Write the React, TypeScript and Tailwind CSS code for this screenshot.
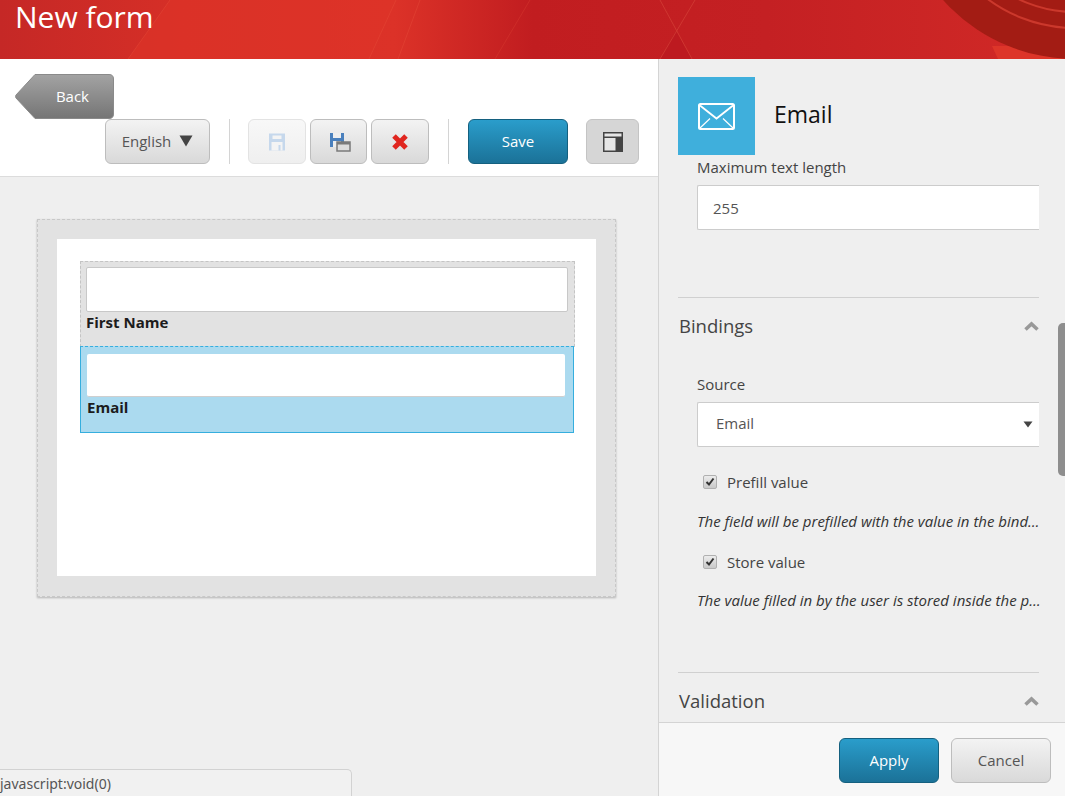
import React, { FC } from "react";

const grayBtn =
  "flex items-center justify-center rounded-[6px] border border-[#bdbdbd] bg-gradient-to-b from-[#f3f3f3] to-[#d9d9d9]";
const blueBtn =
  "flex items-center justify-center rounded-[6px] border border-[#14607f] bg-gradient-to-b from-[#2a9dcb] to-[#1b7298] text-white text-[15px]";

const HeaderArt: FC = () => (
  <svg className="absolute inset-0" width="1065" height="59" viewBox="0 0 1065 59">
    <defs>
      <linearGradient id="hdr" x1="0" x2="1" y1="0" y2="0">
        <stop offset="0" stopColor="#c52826" />
        <stop offset="0.17" stopColor="#d62f27" />
        <stop offset="0.37" stopColor="#dc3228" />
        <stop offset="0.5" stopColor="#c11d20" />
        <stop offset="0.72" stopColor="#c42023" />
        <stop offset="0.95" stopColor="#cf2826" />
        <stop offset="1" stopColor="#cf2826" />
      </linearGradient>
    </defs>
    <rect width="1065" height="59" fill="url(#hdr)" />
    <path d="M128 59 L170 0 H396 L369 59 Z" fill="#de3428" opacity="0.6" />
    <path d="M369 59 L396 0 M128 59 L170 0 M420 0 L398 59" stroke="#e8503c" strokeWidth="1" opacity="0.4" />
    <path d="M495 59 L530 0" stroke="#d6392f" strokeWidth="1" opacity="0.5" />
    <path d="M660 59 L676 31 L692 59 Z" fill="#bd1a20" />
    <path d="M660 0 L692 59 M695 0 L660 59" stroke="#d8483c" strokeWidth="1" opacity="0.6" />
    <path d="M992 46 L1065 46 V59 H998 Z" fill="#dd3529" />
    <circle cx="1075" cy="-118" r="177" fill="#a31c14" />
    <circle cx="1075" cy="-118" r="146" fill="none" stroke="#cb382c" strokeWidth="2" />
    <circle cx="1075" cy="-118" r="130" fill="none" stroke="#cb382c" strokeWidth="2" />
  </svg>
);

const BackButton: FC = () => (
  <div className="relative flex h-[45px] w-[99px] items-center justify-end pr-[25px] text-[15px] text-white">
    <svg className="absolute inset-0" width="99" height="45" viewBox="0 0 99 45">
      <defs>
        <linearGradient id="back" x1="0" x2="0" y1="0" y2="1">
          <stop offset="0" stopColor="#a3a3a3" />
          <stop offset="1" stopColor="#757575" />
        </linearGradient>
      </defs>
      <path
        d="M20 0.5 H94 Q98.5 0.5 98.5 5 V40 Q98.5 44.5 94 44.5 H20 L1 24 Q0 22.5 1 21 Z"
        fill="url(#back)"
        stroke="#8a8a8a"
      />
    </svg>
    <span className="relative">Back</span>
  </div>
);

const FloppyIcon: FC<{ color: string }> = ({ color }) => (
  <svg width="20" height="20" viewBox="0 0 20 20">
    <path d="M2 1.5 H18 V18.5 H2 Z" fill={color} />
    <rect x="5.5" y="3.5" width="9" height="3.5" fill="#f4f4f4" />
    <rect x="4.5" y="10" width="11" height="8.5" fill="#f4f4f4" />
    <rect x="11.5" y="13" width="2" height="5.5" fill={color} />
  </svg>
);

const FloppyCopyIcon: FC = () => (
  <svg width="22" height="20" viewBox="0 0 22 20">
    <path d="M1 1 H15 V15 H1 Z" fill="#4a80bd" />
    <rect x="4" y="1" width="8" height="5" fill="#eeeeee" />
    <rect x="4" y="9" width="8" height="6" fill="#eeeeee" />
    <rect x="8" y="10" width="13" height="9" fill="#dddddd" stroke="#7a7a7a" strokeWidth="1.5" />
    <rect x="8" y="10" width="13" height="2.5" fill="#7a7a7a" />
  </svg>
);

const Chevron: FC = () => (
  <svg width="15" height="10" viewBox="0 0 15 10">
    <path d="M1.5 8.5 L7.5 3 L13.5 8.5" fill="none" stroke="#999" strokeWidth="3.6" />
  </svg>
);

const Checkbox: FC = () => (
  <span className="flex h-[14px] w-[14px] items-center justify-center rounded-[2px] border border-[#b0b0b0] bg-gradient-to-b from-[#ececec] to-[#c9c9c9]">
    <svg width="10" height="10" viewBox="0 0 10 10">
      <path d="M1.5 5 L4 7.5 L8.5 1.5" fill="none" stroke="#333" strokeWidth="2" />
    </svg>
  </span>
);

const FormRow: FC<{ label: string; selected?: boolean }> = ({ label, selected }) =>
  selected ? (
    <div className="relative -mt-px h-[87px] w-[494px] border border-[#35aede] bg-[#abdaef] [border-top-style:dashed] px-[6px] pt-[7px]">
      <div className="h-[43px] w-[478px] rounded-[2px] border-b border-[#cfcfcf] bg-white" />
      <div className="text-[15px] leading-[20px] font-bold text-[#1c1c1c]">{label}</div>
    </div>
  ) : (
    <div className="h-[86px] w-[495px] border border-dashed border-[#c4c4c4] bg-[#e2e2e2] px-[5px] pt-[5px]">
      <div className="h-[45px] w-[482px] rounded-[2px] border border-[#c8c8c8] bg-white" />
      <div className="text-[15px] leading-[20px] font-bold text-[#1c1c1c]">{label}</div>
    </div>
  );

const SectionTitle: FC<{ title: string }> = ({ title }) => (
  <div className="flex items-center justify-between">
    <span className="text-[18.5px] leading-[24px] text-[#444]">{title}</span>
    <Chevron />
  </div>
);

export default function App() {
  return (
    <div className="relative flex h-[796px] w-[1065px] flex-col overflow-hidden bg-[#efefef] font-['Open_Sans',sans-serif]">
      <header className="relative h-[59px] shrink-0 overflow-hidden">
        <HeaderArt />
        <h1 className="relative pl-[15px] text-[30px] leading-[34px] text-white">New form</h1>
      </header>

      <div className="flex min-h-0 flex-1">
        <main className="flex w-[659px] shrink-0 flex-col border-r border-[#d4d4d4]">
          <div className="h-[118px] shrink-0 border-b border-[#dcdcdc] bg-white pt-[15px] pl-[15px]">
            <BackButton />
            <div className="flex h-[45px] items-stretch pl-[90px] text-[15px] text-[#555]">
              <button className={`${grayBtn} w-[105px] gap-[8px] pb-[1px]`}>
                English
                <svg width="14" height="12" viewBox="0 0 14 12">
                  <path d="M0.5 0.5 H13.5 L7 11.5 Z" fill="#444" />
                </svg>
              </button>
              <div className="mr-[18px] ml-[19px] w-px bg-[#d4d4d4]" />
              <button className="flex w-[58px] items-center justify-center rounded-[6px] border border-[#e3e3e3] bg-gradient-to-b from-[#f8f8f8] to-[#efefef]">
                <FloppyIcon color="#c6d8ec" />
              </button>
              <button className={`${grayBtn} ml-[4px] w-[57px] pl-[2px]`}>
                <FloppyCopyIcon />
              </button>
              <button className={`${grayBtn} ml-[4px] w-[58px]`}>
                <svg width="18" height="18" viewBox="0 0 18 18">
                  <path d="M3 3 L15 15 M15 3 L3 15" stroke="#e0261f" strokeWidth="5" />
                </svg>
              </button>
              <div className="mx-[19px] w-px bg-[#d4d4d4]" />
              <button className={`${blueBtn} w-[100px]`}>Save</button>
              <button className="ml-[18px] flex w-[53px] items-center justify-center rounded-[6px] border border-[#c4c4c4] bg-[#d6d6d6]">
                <svg width="20" height="20" viewBox="0 0 20 20">
                  <rect width="20" height="20" fill="#444" />
                  <rect x="1.5" y="1.5" width="17" height="3" fill="#e6e6e6" />
                  <rect x="1.5" y="6" width="11" height="12.5" fill="#e6e6e6" />
                </svg>
              </button>
            </div>
          </div>

          <div className="flex-1 pt-[42px] pl-[37px]">
            <div className="h-[378px] w-[579px] border border-dashed border-[#c8c8c8] bg-[#e2e2e2] p-[19px] shadow-[0_1px_2px_rgba(0,0,0,0.25)]">
              <div className="h-[337px] w-[539px] bg-white pt-[22px] pl-[23px]">
                <FormRow label="First Name" />
                <FormRow label="Email" selected />
              </div>
            </div>
          </div>
        </main>

        <aside className="flex min-w-0 flex-1 flex-col">
          <div className="min-h-0 flex-1 overflow-hidden pt-[18px] pr-[26px] pl-[19px]">
            <div className="flex h-[78px] items-center">
              <div className="flex h-[78px] w-[77px] items-center justify-center bg-[#3fafdc]">
                <svg width="37" height="27" viewBox="0 0 37 27" fill="none" stroke="#fff">
                  <rect x="1" y="1" width="35" height="25" rx="1.5" strokeWidth="2" />
                  <path d="M2 2.5 L18.5 15.5 L35 2.5" strokeWidth="1.8" />
                  <path d="M2 25 L12 15.5 M35 25 L25 15.5" strokeWidth="1.2" />
                </svg>
              </div>
              <span className="mb-[4px] ml-[19px] text-[23px] leading-[30px] text-[#111]">Email</span>
            </div>

            <div className="pl-[19px]">
              <div className="mt-[2px] text-[15px] leading-[20px] text-[#444]">Maximum text length</div>
              <div className="mt-[8px] flex h-[45px] items-center rounded-l-[2px] border border-r-0 border-[#cccccc] bg-white pt-[1px] pl-[15px] text-[15px] text-[#555]">
                255
              </div>
            </div>

            <div className="mt-[67px] border-t border-[#d0d0d0] pt-[16px]">
              <div className="pl-[1px]">
                <SectionTitle title="Bindings" />
              </div>
              <div className="pl-[19px]">
                <div className="mt-[36px] text-[15px] leading-[20px] text-[#444]">Source</div>
                <div className="mt-[8px] flex h-[45px] items-center justify-between rounded-l-[2px] border border-r-0 border-[#cccccc] bg-white pr-[6px] pb-[2px] pl-[18px] text-[15px] text-[#555]">
                  Email
                  <svg className="mt-[2px]" width="10" height="7" viewBox="0 0 10 7">
                    <path d="M0.5 0.5 H9.5 L5 6.5 Z" fill="#444" />
                  </svg>
                </div>
                <div className="mt-[25px] flex h-[20px] items-center gap-[10px] pl-[6px] text-[15px] text-[#444]">
                  <Checkbox />
                  Prefill value
                </div>
                <div className="-mr-[2px] mt-[19px] truncate text-[15px] leading-[20px] text-[#333] italic">
                  The field will be prefilled with the value in the binding
                </div>
                <div className="mt-[21px] flex h-[20px] items-center gap-[10px] pl-[6px] text-[15px] text-[#444]">
                  <Checkbox />
                  Store value
                </div>
                <div className="-mr-[2px] mt-[18px] truncate text-[15px] leading-[20px] text-[#333] italic">
                  The value filled in by the user is stored inside the profile
                </div>
              </div>
            </div>

            <div className="mt-[62px] border-t border-[#d0d0d0] pt-[16px] pl-[1px]">
              <SectionTitle title="Validation" />
            </div>
          </div>

          <footer className="flex h-[74px] shrink-0 items-start justify-end gap-[12px] border-t border-[#d4d4d4] bg-[#f7f7f7] pt-[15px] pr-[14px]">
            <button className={`${blueBtn} h-[45px] w-[100px]`}>Apply</button>
            <button className={`${grayBtn} h-[45px] w-[100px] text-[15px] text-[#555]`}>Cancel</button>
          </footer>
        </aside>
      </div>

      {/* scrollbar thumb over the side panel */}
      <div className="absolute top-[323px] right-0 h-[153px] w-[7px] rounded-l-[5px] bg-[#8e8e8e]" />

      {/* browser status bubble */}
      <div className="absolute bottom-0 left-0 flex h-[27px] w-[352px] items-center rounded-tr-[5px] border-t border-r border-[#d2d2d2] bg-[#f1f1f1] font-['Noto_Sans',sans-serif] text-[14px] text-[#555]">
        javascript:void(0)
      </div>
    </div>
  );
}
